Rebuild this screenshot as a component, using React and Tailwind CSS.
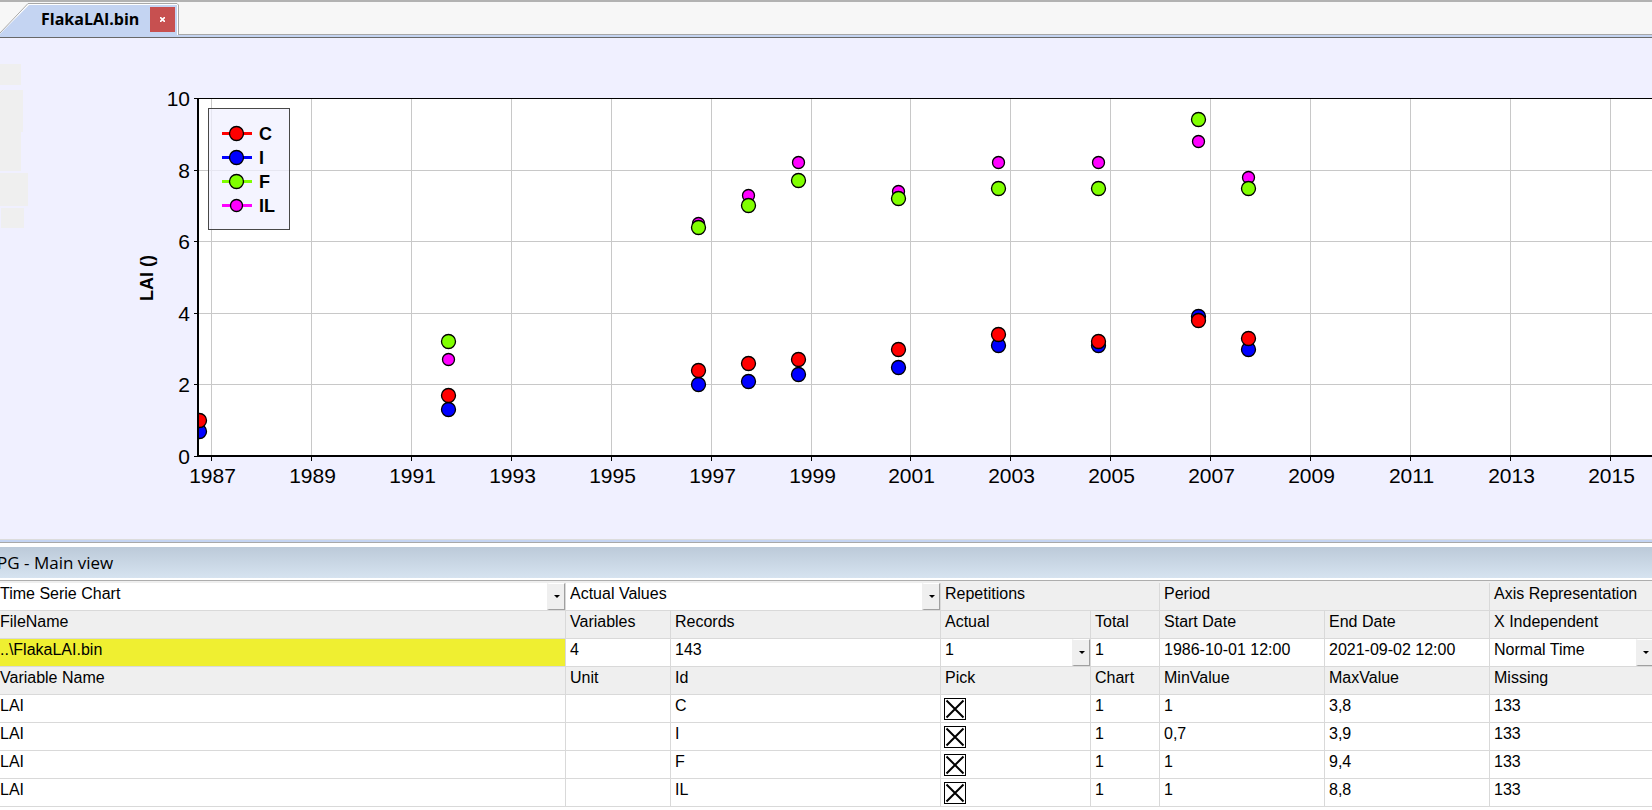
const YEAR_PX = 49.96
const UNIT_PX = 35.8

const gridYears = [1987, 1989, 1991, 1993, 1995, 1997, 1999, 2001, 2003, 2005, 2007, 2009, 2011, 2013, 2015]
const gridValues = [0, 2, 4, 6, 8, 10]

const sampleYears = [1986.75, 1991.75, 1996.75, 1997.75, 1998.75, 2000.75, 2002.75, 2004.75, 2006.75, 2007.75]

const series = [
  { id: 'C', color: '#ff0000', radius: 7, min: '1', max: '3,8', values: [1, 1.7, 2.4, 2.6, 2.7, 3, 3.4, 3.2, 3.8, 3.3] },
  { id: 'I', color: '#0000ff', radius: 7, min: '0,7', max: '3,9', values: [0.7, 1.3, 2, 2.1, 2.3, 2.5, 3.1, 3.1, 3.9, 3] },
  { id: 'F', color: '#80ff00', radius: 7, min: '1', max: '9,4', values: [null, 3.2, 6.4, 7, 7.7, 7.2, 7.5, 7.5, 9.4, 7.5] },
  { id: 'IL', color: '#ff00ff', radius: 6, min: '1', max: '8,8', values: [null, 2.7, 6.5, 7.3, 8.2, 7.4, 8.2, 8.2, 8.8, 7.8] },
]

function xOf(year) {
  return Math.round(211 + (year - 1987) * YEAR_PX) + 0.5
}

function yOf(value) {
  return Math.round(418 - value * UNIT_PX) + 0.5
}

export default function App() {
  return (
    <main className="min-h-screen overflow-hidden bg-white font-['Liberation_Sans',Arial,sans-serif] text-black">
      <TabBar />
      <ChartPanel />
      <div className="h-[3px] border-b border-[#a8a8a8] bg-[#c4d4f2]" />
      <div className="h-1 bg-white" />
      <h2 className="h-[31px] bg-linear-to-b from-[#bccad9] to-[#d6e3f0] font-['Open_Sans','Noto_Sans',sans-serif] text-[17px] leading-[32px]">
        <span className="-ml-[3px]">PG - Main view</span>
      </h2>
      <div className="h-[5px] border-t-2 border-white bg-[#efefef]">
        <div className="h-px bg-[#adadad]" />
      </div>
      <VariableTable />
    </main>
  )
}

function TabBar() {
  return (
    <header className="flex h-[38px] items-end border-t-2 border-b border-t-[#b2b2b2] border-b-[#686868] bg-[#f7f7f7]">
      <div className="relative flex h-[35px] w-[179px] items-center">
        <svg className="absolute inset-0" width="179" height="35" aria-hidden="true">
          <path d="M0 31 L28 1.5 H177 L178.5 3 V33" fill="#fff" stroke="#a8a8a8" />
          <path d="M0 32 L29 3 H177 V35 H0Z" fill="#c4d4f2" />
          <rect x="177" y="33" width="2" height="2" fill="#c4d4f2" />
        </svg>
        <span className="relative ml-[41px] w-[109px] pb-px font-['Open_Sans','Noto_Sans',sans-serif] text-base font-bold">FlakaLAI.bin</span>
        <button type="button" aria-label="Close tab" className="relative flex h-[25px] w-[25px] items-center justify-center bg-[#c75050]">
          <svg width="5" height="5" viewBox="0 0 5 5" aria-hidden="true">
            <path d="M0 0 L5 5 M5 0 L0 5" stroke="#fff" strokeWidth="1.6" />
          </svg>
        </button>
      </div>
      <div className="h-[3px] flex-1 border-t border-[#a8a8a8] bg-[#c4d4f2]" />
    </header>
  )
}

function ChartPanel() {
  return (
    <section className="h-[502px] border-b border-[#dcdcdc] bg-[#f0f0ff]">
      <svg className="block h-[500px] w-full" role="img" aria-label="LAI time series">
        <g fill="#efefef">
          <rect x="0" y="26" width="21" height="21" />
          <rect x="0" y="52" width="23" height="42" />
          <rect x="0" y="94" width="21" height="39" />
          <rect x="0" y="135" width="28" height="33" />
          <rect x="1" y="170" width="23" height="20" />
        </g>

        <rect x="198" y="60" width="100%" height="358" fill="#fff" />
        <g stroke="#c8c8c8">
          {gridYears.map((year) => <line key={year} x1={xOf(year)} x2={xOf(year)} y1="61" y2="418" />)}
          {gridValues.slice(1, 5).map((v) => <line key={v} x1="199" x2="100%" y1={yOf(v)} y2={yOf(v)} />)}
        </g>

        <g stroke="#000">
          <line x1="194" x2="100%" y1="60.5" y2="60.5" />
          {gridValues.map((v) => <line key={v} x1="194" x2="198" y1={yOf(v)} y2={yOf(v)} />)}
          {gridYears.map((year) => <line key={year} x1={xOf(year)} x2={xOf(year)} y1="418" y2="423" />)}
        </g>

        {/* nested svg clips the first samples at the axis */}
        <svg x="198" y="0" width="100%" height="500">
          <g transform="translate(-198 0)" stroke="#000" strokeWidth="1.3">
            {[...series].reverse().map((s) => (
              <g key={s.id} fill={s.color}>
                {s.values.map((v, i) => v === null ? null : (
                  <circle key={i} cx={xOf(sampleYears[i])} cy={yOf(v)} r={s.radius} />
                ))}
              </g>
            ))}
          </g>
        </svg>

        <line x1="198" x2="198" y1="60" y2="419" stroke="#000" strokeWidth="2" />
        <line x1="197" x2="100%" y1="418" y2="418" stroke="#000" strokeWidth="2" />

        <g fontSize="21" textAnchor="end">
          {gridValues.map((v) => <text key={v} x="190" y={yOf(v) + 7.5}>{v}</text>)}
        </g>
        <g fontSize="21" textAnchor="middle">
          {gridYears.map((year) => <text key={year} x={xOf(year) + 1} y="445">{year}</text>)}
        </g>
        <text transform="translate(153 240) rotate(-90)" textAnchor="middle" fontSize="18" fontWeight="bold">LAI ()</text>

        <Legend />
      </svg>
    </section>
  )
}

function Legend() {
  return (
    <g>
      <rect x="208.5" y="70.5" width="81" height="121" fill="#f0f0ff" fillOpacity="0.75" stroke="#484848" />
      {series.map((s, i) => (
        <g key={s.id} transform={`translate(0 ${i * 24})`}>
          <line x1="222" x2="252" y1="95.5" y2="95.5" stroke={s.color} strokeWidth="3" />
          <circle cx="236.5" cy="95.5" r={s.radius} fill={s.color} stroke="#000" strokeWidth="1.3" />
          <text x="259" y="102" fontSize="18" fontWeight="bold">{s.id}</text>
        </g>
      ))}
    </g>
  )
}

const gray = 'bg-[#efefef]'

function VariableTable() {
  return (
    <table className="w-[calc(100%+2px)] table-fixed border-separate border-spacing-0 text-base leading-[22px]">
      <colgroup>
        <col className="w-[566px]" />
        <col className="w-[105px]" />
        <col className="w-[270px]" />
        <col className="w-[150px]" />
        <col className="w-[69px]" />
        <col className="w-[165px]" />
        <col className="w-[165px]" />
        <col />
      </colgroup>
      <tbody>
        <tr>
          <Cell first><Picker label="Chart type" value="Time Serie Chart" /></Cell>
          <Cell span={2}><Picker label="Value mode" value="Actual Values" /></Cell>
          <Cell className={gray} span={2}>Repetitions</Cell>
          <Cell className={gray} span={2}>Period</Cell>
          <Cell className={gray}>Axis Representation</Cell>
        </tr>
        <Row className={gray} values={['FileName', 'Variables', 'Records', 'Actual', 'Total', 'Start Date', 'End Date', 'X Independent']} />
        <tr>
          <Cell first className="bg-[#efef31]">..\FlakaLAI.bin</Cell>
          <Cell>4</Cell>
          <Cell>143</Cell>
          <Cell><Picker label="Actual repetition" value="1" /></Cell>
          <Cell>1</Cell>
          <Cell>1986-10-01 12:00</Cell>
          <Cell>2021-09-02 12:00</Cell>
          <Cell><Picker label="X axis" value="Normal Time" /></Cell>
        </tr>
        <Row className={gray} values={['Variable Name', 'Unit', 'Id', 'Pick', 'Chart', 'MinValue', 'MaxValue', 'Missing']} />
        {series.map((s) => (
          <Row key={s.id} values={['LAI', '', s.id, <Pick id={s.id} />, '1', s.min, s.max, '133']} />
        ))}
      </tbody>
    </table>
  )
}

function Row({ values, className }) {
  return (
    <tr>
      {values.map((value, i) => <Cell key={i} first={i === 0} className={className}>{value}</Cell>)}
    </tr>
  )
}

function Cell({ children, span, first = false, className = '' }) {
  return (
    <td colSpan={span} className={`h-7 border-r border-b border-[#d9d9d9] p-0 align-top whitespace-nowrap last:border-r-0 ${first ? 'pl-0' : 'pl-1'} ${className}`}>
      {children}
    </td>
  )
}

function Picker({ label, value }) {
  return (
    <div className="relative h-[27px]">
      <select aria-label={label} className="block h-[22px] w-full appearance-none bg-transparent p-0 leading-[22px] outline-none">
        <option>{value}</option>
      </select>
      <span className="pointer-events-none absolute top-0 right-0 flex h-[27px] w-[18px] items-center justify-center border-t border-r border-b border-l-2 border-t-white border-r-[#a0a0a0] border-b-[#a0a0a0] border-l-[#efefef] bg-[#efefef]">
        <svg width="6" height="3" aria-hidden="true">
          <path d="M0 0 H6 L3 3Z" />
        </svg>
      </span>
    </div>
  )
}

function Pick({ id }) {
  return (
    <label className="relative mt-[3px] -ml-px block size-[22px]">
      <input type="checkbox" defaultChecked aria-label={`Pick ${id}`} className="peer block size-[22px] appearance-none border border-black bg-white" />
      <svg className="pointer-events-none absolute inset-0 hidden peer-checked:block" width="22" height="22" aria-hidden="true">
        <path d="M2.5 2.5 L19.5 19.5 M19.5 2.5 L2.5 19.5" stroke="#000" strokeWidth="2" />
      </svg>
    </label>
  )
}
